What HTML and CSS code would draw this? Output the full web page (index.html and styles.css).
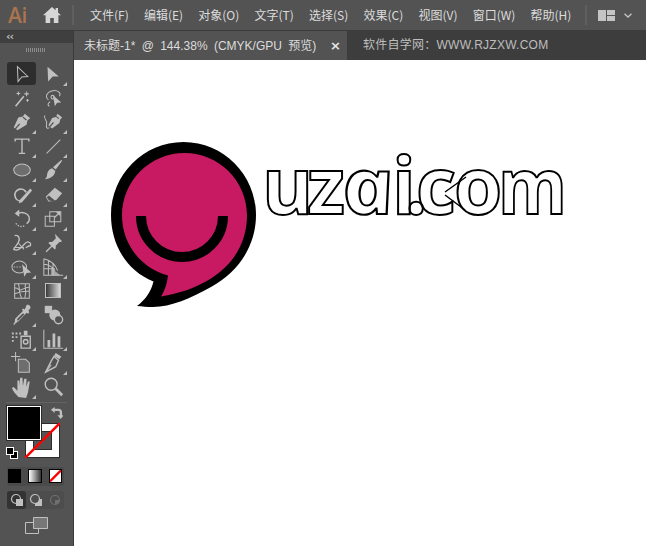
FILE: index.html
```html
<!DOCTYPE html>
<html lang="zh">
<head>
<meta charset="utf-8">
<title>Illustrator</title>
<link rel="stylesheet" href="styles.css">
</head>
<body>
<div class="app">
  <header class="menubar">
    <span class="ai-logo">Ai</span>
    <svg class="home" viewBox="0 0 18 16"><path d="M9 0 0 8.200h2.600V16h4.600v-5h3.600v5h4.600V8.200H18L15 5.500V1h-2.400v2.300z"/></svg>
    <span class="sep"></span>
    <nav class="menu">
      <span>文件(F)</span><span>编辑(E)</span><span>对象(O)</span><span>文字(T)</span><span>选择(S)</span><span>效果(C)</span><span>视图(V)</span><span>窗口(W)</span><span>帮助(H)</span>
    </nav>
    <span class="sep sep-right"></span>
    <svg class="layout" viewBox="0 0 17 11"><path d="M0 0h8v11H0zM9 0h8v5H9zM9 6h8v5H9z"/></svg>
    <svg class="chevron" viewBox="0 0 8 5"><path d="M.5.7 4 4l3.500-3.300" /></svg>
  </header>
  <main class="main">
    <aside class="tools">
      <div class="tools-head"><span class="collapse">‹‹</span></div>
      <div class="grip"></div>
      <div class="tool-grid">
        <div class="tool active"><svg viewBox="0 0 24 24"><path class="o" d="M7 4 18.300 14.700 11.700 15.300 7.700 20.300Z"/></svg></div>
        <div class="tool more"><svg viewBox="0 0 24 24"><path class="f" d="M6 4 18.300 14.700 11.700 14.700 6.700 20.300Z"/></svg></div>

        <div class="tool"><svg viewBox="0 0 24 24"><path class="o w2" d="M5 21 14 10"/><path class="o" d="M8 5v4M6 7h4M17 5v5M14.500 7.500h5M18 13v3M16.500 14.500h3"/></svg></div>
        <div class="tool"><svg viewBox="0 0 24 24"><path class="o" d="M7 14C3 11 5 5 12 4c6-.5 9 3 7 6M9 16c-3 2-3 4-1 5M10 10c2-2 4 0 3 2s-4 1-3-2"/><path class="f" d="M12 9l9 8-4.500.3-2.500 3.700z"/></svg></div>

        <div class="tool more"><svg viewBox="0 0 24 24"><path class="f" d="M15 3l6 5-3 2-1 5-10 6-1.500-1.500L10 14.500 9 13.500 4 19l-1-1 5-11 5-1z"/><path class="dk" d="M13.500 6.200l3.800 3.100-1 1-3.800-3.100z"/></svg></div>
        <div class="tool more"><svg viewBox="0 0 24 24"><path class="f" d="M17 3l5 4-2 2-1 4-8 6-2-1.500 4-4.500-1-1-4 4.500-1-1 4-8 4-1z"/><path class="dk" d="M15.800 5.500l3 2.500-.8.800-3-2.500z"/><path class="o" d="M3 5C1 9 7 10 5 15c-1 3 1 5 3 3"/></svg></div>

        <div class="tool more"><svg viewBox="0 0 24 24"><path class="o w15" d="M4 4.500h16M12 4.500v15M8.500 20h7M4.500 4v3M19.500 4v3"/></svg></div>
        <div class="tool more"><svg viewBox="0 0 24 24"><path class="o" d="M5 20 20 5"/></svg></div>

        <div class="tool more"><svg viewBox="0 0 24 24"><ellipse class="g" cx="12" cy="12" rx="9" ry="6.500"/></svg></div>
        <div class="tool more"><svg viewBox="0 0 24 24"><path class="f" d="M21 1l1 1-7 9.500-3-2.500zM11 10l3.500 3C14 18 9 22 3 22c3-2 2-4 3-7 .7-2.500 2.500-4 5-5z"/></svg></div>

        <div class="tool more"><svg viewBox="0 0 24 24"><path class="o w2" d="M16.500 9A6.500 6.500 0 1 0 11 18.500"/><path class="f" d="M21 5l2 2-11 13-3.500 1 1-3.500z"/></svg></div>
        <div class="tool more"><svg viewBox="0 0 24 24"><path class="f" d="M14 4l8 6-6 7-3 1.500L7 19 4 14z"/><path class="dk" d="M7.500 12.500l6.500 5.500-.8.800-2.200-.3-3.500-.5-2.300-3.500z"/></svg></div>

        <div class="tool more"><svg viewBox="0 0 24 24"><path class="o w15" d="M7 6.500C11 3.500 20 5 20 12c0 2-1 4-3 5"/><path class="f" d="M9 1.500v8L4 6z"/><path class="o w15 dot" d="M14.500 19.500C11 21 7 20 5 16"/></svg></div>
        <div class="tool more"><svg viewBox="0 0 24 24"><path class="o" d="M3.500 9h10v11h-10zM8.500 4h12v11h-12z"/><path class="f" d="M20 4v5l-2-2-4 4-1-1 4-4-2-2z"/></svg></div>

        <div class="tool more"><svg viewBox="0 0 24 24"><path class="o w15" d="M4 4c3-1 5 1 5 4 0 4-4 7-6 11 4 2 7-1 10-4 2-2 4-5 6-4 2 0 3 2 2 4-3 0-3 2-5 2"/><path class="o" d="M3 17h11M8 12l6 7"/></svg></div>
        <div class="tool"><svg viewBox="0 0 24 24"><path class="f" d="M14 2l8 8-2 1-1 0-4 4 0 3-1 1-3-3-6 6-1-1 6-6-3-3 1-1 3 0 4-4 0-1z"/></svg></div>

        <div class="tool more"><svg viewBox="0 0 24 24"><ellipse class="o" cx="9" cy="12" rx="8" ry="6.500"/><path class="o dot" d="M3 12h9"/><path class="f" d="M12 9l10 9-5 .5-2.500 4z"/></svg></div>
        <div class="tool more"><svg viewBox="0 0 24 24"><path class="o" d="M2 3v18h21M2 3c8 2 13 7 15 13M2 9c5 0 10 3 12 7M7 5v16M12 9v12M2 14h12"/><path class="f t" d="M10 13l10 8H10z"/></svg></div>

        <div class="tool"><svg viewBox="0 0 24 24"><path class="o" d="M4 4h16v16H4zM4 9c3-1 4 2 6 2s7-4 10-3M4 15c3-1 4-1 6-2s7 0 10-1M8 4c2 5 0 11 4 16M16 4c-2 4 2 7-1 16"/></svg></div>
        <div class="tool"><div class="grad-tool"></div></div>

        <div class="tool more"><svg viewBox="0 0 24 24"><path class="f" d="M17 1c3-1 5 2 4 4l-2 2 1 2-1.500 1.500-1.500-1-8.500 9L5 21l-1.500 2-1-1 1.500-2 .5-4 8.500-8.500-1-1.500L13 5l2 1z"/><path class="dk" d="M7 16l6-6 1.500 1.500-6 6-2 .7z"/></svg></div>
        <div class="tool"><svg viewBox="0 0 24 24"><path class="f" d="M3 2h8v8H3z"/><circle class="f" cx="14" cy="12" r="6"/><circle class="h" cx="18" cy="17" r="4.500"/></svg></div>

        <div class="tool more"><svg viewBox="0 0 24 24"><path class="f" d="M1 5h2v2H1zM5 5h2v2H5zM9 5h2v2H9zM1 9h2v2H1zM5 9h2v2H5zM1 13h2v2H1z"/><path class="o w15" d="M11 9h10v13H11z"/><path class="f" d="M14 3h4v5h-4z"/><circle class="o w15" cx="16" cy="15" r="2.500"/></svg></div>
        <div class="tool more"><svg viewBox="0 0 24 24"><path class="o" d="M2 2v20h21"/><path class="f" d="M6 13h3v8H6zM11.500 6h3v15h-3zM17 9h3v12h-3z"/></svg></div>

        <div class="tool"><svg viewBox="0 0 24 24"><path class="o" d="M0 5h10M5 0v10"/><path class="g" d="M8 8h8l4 4v10H8z"/></svg></div>
        <div class="tool more"><svg viewBox="0 0 24 24"><path class="f" d="M15 1l6 4-2 3-6-4z"/><path class="o w15" d="M13 5l5 4-3 7-11 6 6-12z"/><path class="o" d="M4 22l6-8"/></svg></div>

        <div class="tool more"><svg viewBox="0 0 24 24"><path class="f" d="M8 23c-2-3-6-6-7-10l2-1 4 4V5h2v6l1-9h2.500l.5 9 1.500-8h2.500l-.5 9 2-6h2l-2 12-2 6z"/></svg></div>
        <div class="tool"><svg viewBox="0 0 24 24"><circle class="o w15" cx="10" cy="9" r="6.500"/><path class="o w3" d="M15 14l7 7"/></svg></div>
      </div>
      <div class="tools-rule"></div>
      <div class="color-box">
        <div class="stroke-box"><div class="stroke-hole"></div></div>
        <svg class="stroke-none" viewBox="0 0 35 35"><path d="M0 35 35 0"/></svg>
        <div class="fill-box"></div>
        <svg class="swap" viewBox="0 0 14 14"><path d="M1 4l4-3v2h4c3 0 4 2 4 4v3h2l-3.500 4L8 10h2.500V7c0-1-.5-1.500-1.500-1.500H5v2z"/></svg>
        <div class="mini mini-back"></div>
        <div class="mini mini-front"></div>
      </div>
      <div class="modes">
        <div class="mode mode-solid"></div>
        <div class="mode mode-grad"></div>
        <div class="mode mode-none"><svg viewBox="0 0 12 12"><path d="M0 12 12 0"/></svg></div>
      </div>
      <div class="draws">
        <div class="draw draw-on"><svg viewBox="0 0 14 14"><circle class="dr-o" cx="6" cy="6" r="4.500"/><path class="dr-f" d="M6 6h7v7H6z"/></svg></div>
        <div class="draw"><svg viewBox="0 0 14 14"><circle class="dr-o" cx="6" cy="6" r="4.500"/><path class="dr-f" d="M6 10a4 4 0 0 0 4-4h3v7H6z"/></svg></div>
        <div class="draw draw-off"><svg viewBox="0 0 14 14"><circle class="dr-o" cx="7" cy="7" r="4.500"/><path class="dr-f" d="M7 7h4.500a4.500 4.500 0 0 1-4.500 4.500z"/></svg></div>
      </div>
      <svg class="screen" viewBox="0 0 23 17"><path class="sc-back" d="M.5 5.500h13v11H.5z"/><path class="sc-front" d="M8.500.5h14v11h-14z"/></svg>
    </aside>
    <section class="work">
      <div class="tabs">
        <div class="tab"><span class="tab-title">未标题-1* @ 144.38% (CMYK/GPU 预览)</span><span class="tab-x">×</span></div>
        <div class="tab-other">软件自学网：WWW.RJZXW.COM</div>
      </div>
      <div class="canvas">
        <svg class="art" viewBox="74 60 572 486">
          <path class="logo-k" d="M153.500 281.500C127 271 111 245 111 215c0-40 32.500-73 72.500-73S256 175 256 215c0 30-17 57-45 72-20 11-40 20-58 20-6 0-11-.500-16-1 8-6 14-14 16.500-24.500z"/>
          <path class="logo-p" d="M168 275.500C140 268 122 243 122 215.500 122 181 150 153 184.500 153S247 181 247 215.500c0 24-11 47-36 63-16 10-32 15-50 18 4-6 6-13 7-21z"/>
          <path class="logo-s" d="M141 216a41 41 0 0 0 82 0"/>
          <text class="word" x="262 307" y="214">uz</text>
          <text class="word word-a" transform="translate(346 214) skewX(11) scale(1.130 1)">a</text>
          <text class="word" x="392 405 416 454" y="214">i.co</text>
          <text class="word" transform="translate(498 214) scale(.900 1)">m</text>
          <path class="word-cut" d="M445 192 466 177M445 195 465 210"/>
        </svg>
      </div>
    </section>
  </main>
</div>
</body>
</html>
```
FILE: styles.css
```css
* { box-sizing: border-box; }
html, body { margin: 0; padding: 0; }
body { width: 646px; height: 546px; overflow: hidden; background: #535353; font-family: "Liberation Sans", "Noto Sans CJK SC", sans-serif; }
.app { display: flex; flex-direction: column; width: 646px; height: 546px; }

.menubar { flex: 0 0 31px; height: 31px; display: flex; align-items: center; background: #535353; border-bottom: 1px solid #3c3c3c; color: #dcdcdc; font-size: 12px; }
.ai-logo { width: 43px; padding-left: 8px; font: 600 21px/30px "Open Sans", sans-serif; color: #a9744f; letter-spacing: -.3px; }
.home { width: 18px; height: 16px; fill: #d6d6d6; }
.sep { width: 2px; height: 20px; margin-left: 11px; background: #5f5f5f; }
.menu { display: flex; gap: 15.200px; margin-left: 16px; width: 495px; flex: none; white-space: nowrap; font-family: "Noto Sans CJK SC", sans-serif; line-height: 16px; }
.menu span { flex: none; }
.sep-right { margin-left: 0; }
.layout { width: 17px; height: 11px; margin-left: 11px; fill: #c4c4c4; }
.chevron { width: 8px; height: 5px; margin-left: 9px; fill: none; stroke: #c4c4c4; stroke-width: 1.300; }

.main { flex: 1; display: flex; min-height: 0; }

.tools { flex: 0 0 74px; width: 74px; background: #535353; border-right: 1px solid #3a3a3a; display: flex; flex-direction: column; }
.tools-head { height: 12px; background: #3f3f3f; color: #bdbdbd; display: flex; align-items: center; padding-left: 6px; }
.collapse { font: 700 11px/12px "DejaVu Sans", sans-serif; letter-spacing: -1px; }
.grip { width: 20px; height: 4px; margin: 5px 0 0 26px; background: repeating-linear-gradient(90deg, #8c8c8c 0 1px, transparent 1px 2px); }
.tool-grid { display: grid; grid-template-columns: 31px 31px; grid-auto-rows: 24.100px; margin: 10px 0 0 6px; }
.tool { position: relative; display: flex; align-items: center; justify-content: center; }
.tool svg { width: 22px; height: 22px; overflow: visible; }
.tool.active { background: #2e2e2e; border-radius: 3px; width: 29px; height: 23px; margin-left: 1px; }
.tool.more::after { content: ""; position: absolute; right: 1px; bottom: 0; border-style: solid; border-width: 0 0 4px 4px; border-color: transparent transparent #bdbdbd transparent; }
.o { fill: none; stroke: #c0c0c0; stroke-width: 1.100; }
.w15 { stroke-width: 1.500; }
.w2 { stroke-width: 1.800; }
.w3 { stroke-width: 3; }
.dot { stroke-dasharray: 1.500 1.500; }
.f { fill: #c0c0c0; }
.t { opacity: .75; }
.dk { fill: #535353; }
.g { fill: #6e6e6e; stroke: #c0c0c0; stroke-width: 1.100; }
.h { fill: #535353; stroke: #c0c0c0; stroke-width: 1.500; }
.grad-tool { width: 16px; height: 15px; border: 1px solid #c0c0c0; background: linear-gradient(90deg, #3a3a3a, #d8d8d8); }

.tools-rule { height: 1px; margin: 3px 6px 0; background: #636363; }
.color-box { position: relative; height: 60px; margin-top: 3px; }
.fill-box { position: absolute; left: 7px; top: 0; width: 34px; height: 34px; background: #000; border: 1px solid #fff; outline: 1px solid #2c2c2c; }
.stroke-box { position: absolute; left: 25px; top: 17px; width: 35px; height: 35px; background: #fff; border: 1px solid #2c2c2c; padding: 7px; }
.stroke-hole { width: 19px; height: 19px; margin-left: 0; background: #535353; border: 1px solid #2c2c2c; }
.stroke-none { position: absolute; left: 25px; top: 17px; width: 35px; height: 35px; fill: none; stroke: #f00; stroke-width: 2.500; }
.swap { position: absolute; left: 50px; top: 0; width: 13px; height: 13px; fill: #c0c0c0; }
.mini { position: absolute; width: 8px; height: 8px; background: #000; border: 1px solid #fff; }
.mini-back { left: 10px; top: 45px; }
.mini-front { left: 6px; top: 41px; }

.modes { display: flex; gap: 1px; width: 57px; height: 19px; margin: 1px 0 0 7px; background: #4a4a4a; border-radius: 3px; padding: 2px 2px 2px 1px; }
.mode { width: 14px; height: 14px; border: 1px solid #000; margin-right: 6px; }
.mode-solid { background: #000; }
.mode-grad { background: linear-gradient(90deg, #fff, #333); }
.mode-none { background: #fff; margin-right: 0; }
.mode-none svg { display: block; stroke: #f00; stroke-width: 2.500; }

.draws { display: flex; width: 57px; height: 18px; margin: 5px 0 0 7px; background: #4d4d4d; border-radius: 3px; }
.draw { flex: 1; display: flex; align-items: center; justify-content: center; }
.draw svg { width: 14px; height: 14px; }
.draw-on { background: #333; border-radius: 3px; }
.dr-o { fill: none; stroke: #c0c0c0; stroke-width: 1.200; }
.dr-f { fill: #c0c0c0; }
.draw-off { opacity: .3; }

.screen { width: 23px; height: 17px; margin: 8px 0 0 25px; }
.sc-back { fill: #535353; stroke: #c0c0c0; }
.sc-front { fill: #777; stroke: #c0c0c0; }

.work { flex: 1; min-width: 0; display: flex; flex-direction: column; }
.tabs { flex: 0 0 29px; height: 29px; display: flex; background: #3d3d3d; }
.tab { width: 273px; display: flex; align-items: center; justify-content: space-between; padding: 0 6px 0 10px; background: #535353; color: #dcdcdc; font: 12px/16px "Liberation Sans", "Noto Sans CJK SC", sans-serif; white-space: pre; word-spacing: 3px; }
.tab-x { font: 700 13px/16px "DejaVu Sans", sans-serif; color: #e6e6e6; }
.tab-other { padding-left: 16px; color: #bdbdbd; font: 12px/29px "Liberation Sans", "Noto Sans CJK SC", sans-serif; letter-spacing: .25px; }
.canvas { flex: 1; background: #fff; min-height: 0; }
.art { display: block; width: 100%; height: 100%; }
.logo-k { fill: #000; }
.logo-p { fill: #c71a62; }
.logo-s { fill: none; stroke: #000; stroke-width: 10; }
.word { font: 700 78px "Open Sans", sans-serif; fill: none; stroke: #000; stroke-width: 2; }
.word-a { font-style: italic; }
.word-cut { fill: none; stroke: #000; stroke-width: 1.500; }
```
